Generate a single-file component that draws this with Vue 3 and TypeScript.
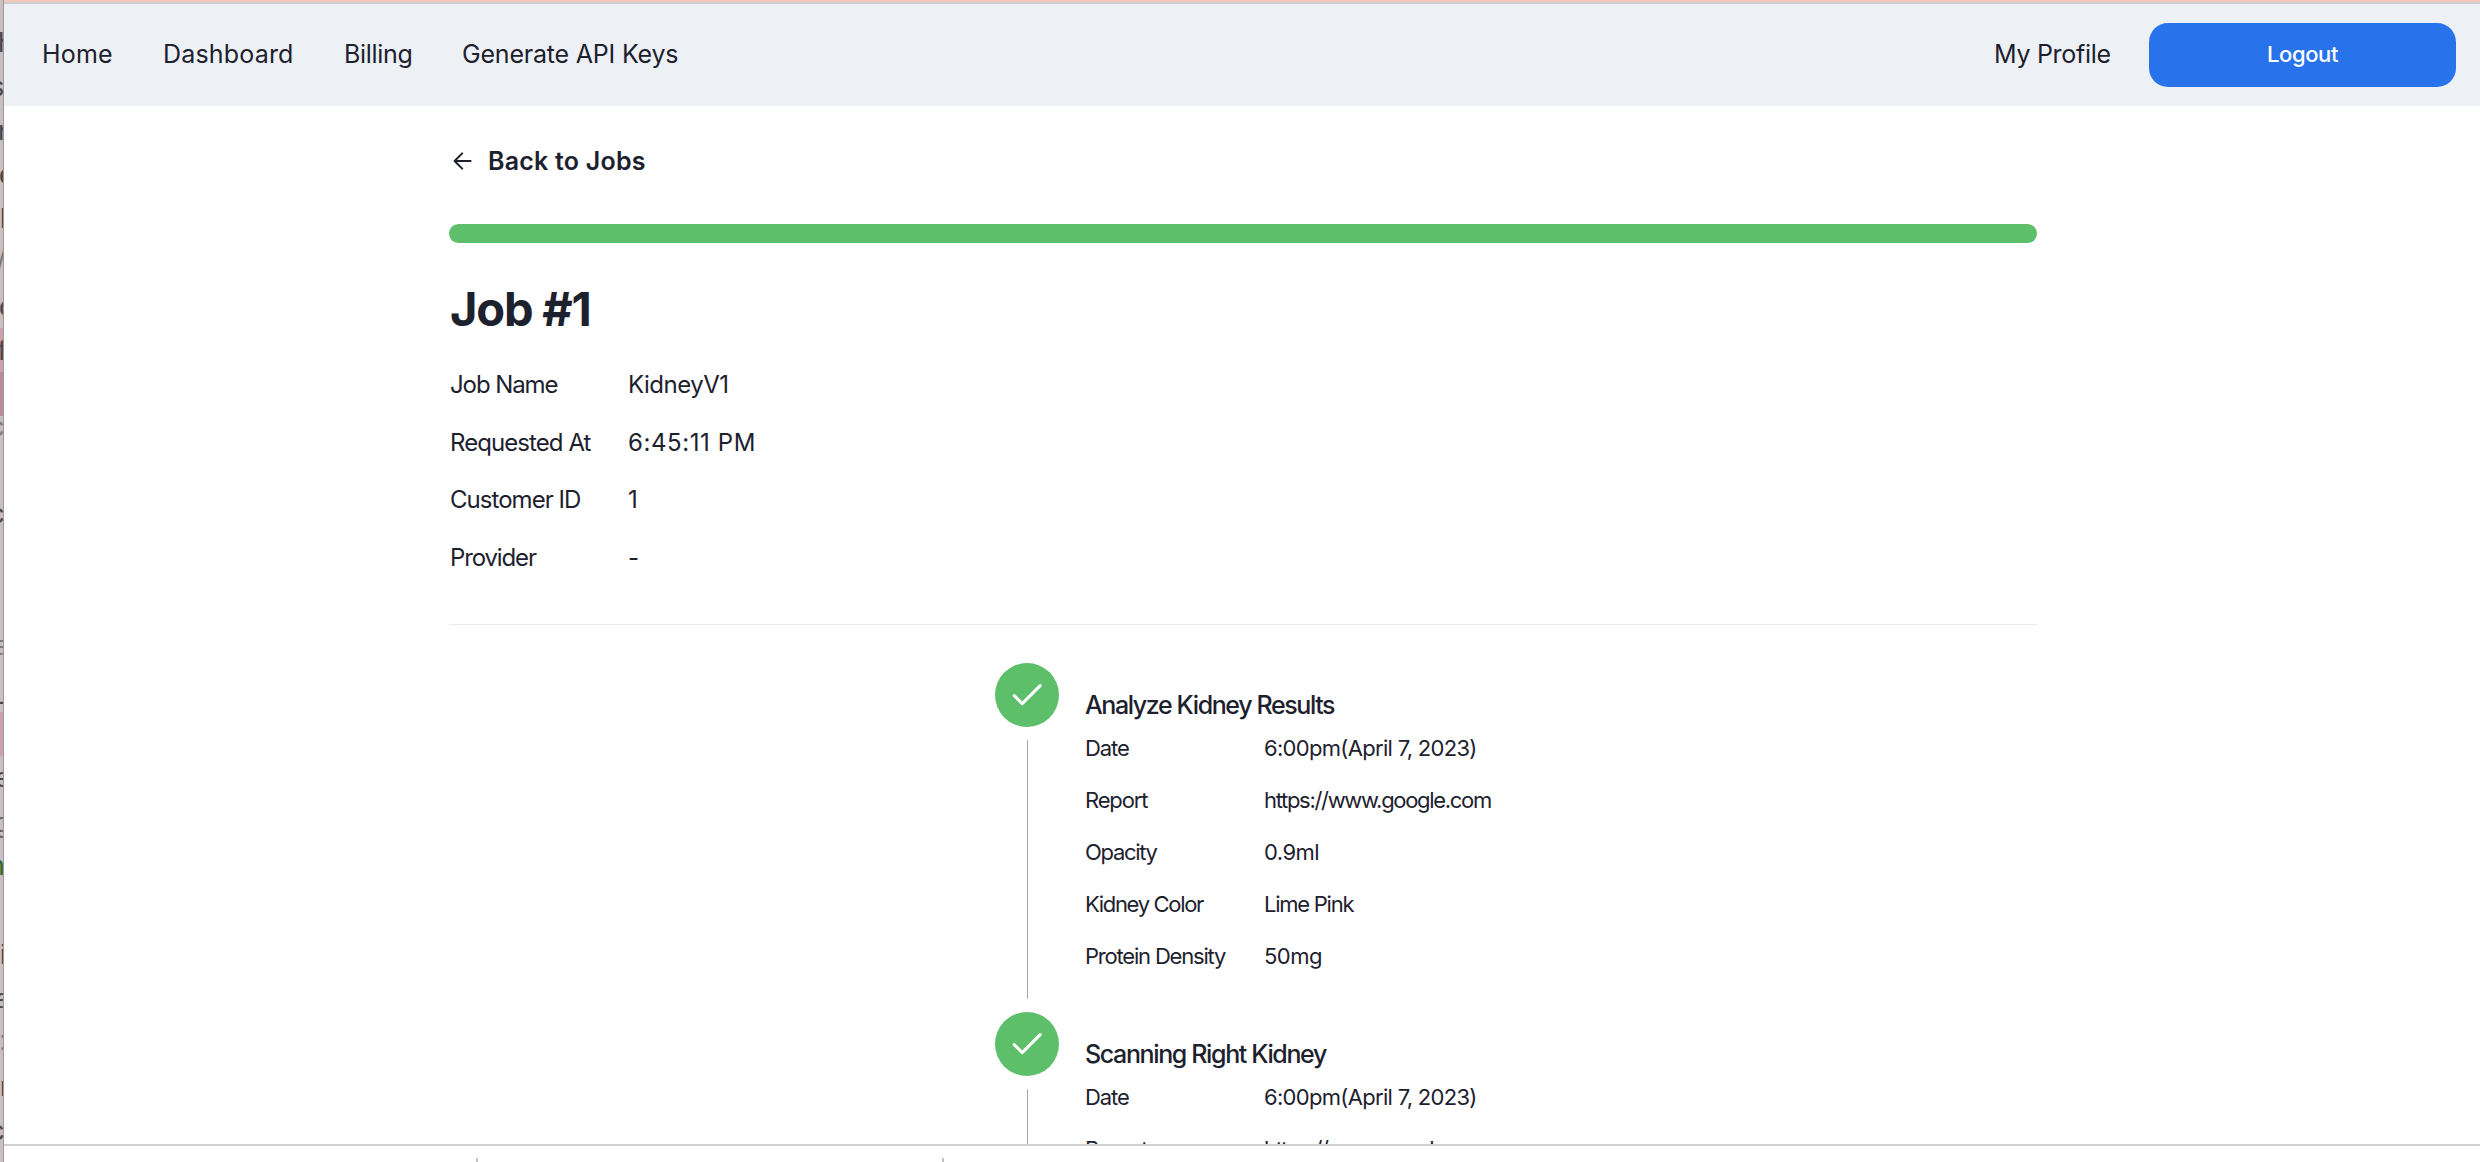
<script setup lang="ts">
interface Label {
  text: string
  spacing: number
}
interface Row {
  label: Label
  value: Label
}
interface Step {
  title: Label
  rows: Row[]
}
interface Glyph {
  text: string
  baseline: number
  left: number
  color?: string
}

const label = (text: string, spacing = 0): Label => ({ text, spacing })
const track = (l: Label) => ({ letterSpacing: `${l.spacing}px` })

const links: Label[] = [
  label('Home', 0.2),
  label('Dashboard', 0.18),
  label('Billing', -0.3),
  label('Generate API Keys', -0.2),
]
const profile = label('My Profile', -0.3)

const jobRows: Row[] = [
  { label: label('Job Name', -1.09), value: label('KidneyV1', -0.5) },
  { label: label('Requested At', -0.93), value: label('6:45:11 PM', 0.58) },
  { label: label('Customer ID', -0.96), value: label('1') },
  { label: label('Provider', -1.13), value: label('-') },
]

const resultRows: Row[] = [
  { label: label('Date', -1.07), value: label('6:00pm(April 7, 2023)', -0.69) },
  { label: label('Report', -1.15), value: label('https://www.google.com', -1.31) },
  { label: label('Opacity', -1.3), value: label('0.9ml', -0.55) },
  { label: label('Kidney Color', -1.33), value: label('Lime Pink', -1.25) },
  { label: label('Protein Density', -1.2), value: label('50mg', -0.5) },
]

const steps: Step[] = [
  { title: label('Analyze Kidney Results', -1.39), rows: resultRows },
  { title: label('Scanning Right Kidney', -1.37), rows: resultRows },
]

// Slivers of the window that sits behind this one, along the left edge.
const glyphs: Glyph[] = [
  { text: 'h', baseline: 52, left: -2 },
  { text: 's', baseline: 96, left: -10 },
  { text: 'r', baseline: 140, left: -2 },
  { text: 'e', baseline: 184, left: -1 },
  { text: 'l', baseline: 228, left: 0 },
  { text: '/', baseline: 271, left: -3, color: '#7d7878' },
  { text: 'c', baseline: 316, left: -1 },
  { text: 'f', baseline: 360, left: -2 },
  { text: 'c', baseline: 436, left: -10, color: '#807b7c' },
  { text: 'c', baseline: 523, left: -10 },
  { text: 'a', baseline: 655, left: -6, color: '#7d7878' },
  { text: '-', baseline: 710, left: -3 },
  { text: 'e', baseline: 787, left: -5 },
  { text: 'g', baseline: 832, left: -5, color: '#6b6667' },
  { text: 'n', baseline: 875, left: -11, color: '#2c6a1c' },
  { text: 'i', baseline: 964, left: 0 },
  { text: 'a', baseline: 1008, left: -5 },
  { text: ':', baseline: 1050, left: -1, color: '#7d7878' },
  { text: 'r', baseline: 1096, left: 0 },
  { text: 'c', baseline: 1140, left: -10 },
]
const place = (g: Glyph) => ({ top: `${g.baseline - 25}px`, left: `${g.left}px`, color: g.color })
</script>

<template>
  <div class="screen">
    <aside class="behind" aria-hidden="true">
      <i class="band light"></i>
      <i class="band deep"></i>
      <i class="band light low"></i>
      <span v-for="g in glyphs" :key="g.baseline" class="glyph" :style="place(g)">{{ g.text }}</span>
    </aside>

    <div class="window">
      <header class="nav">
        <nav class="links">
          <a v-for="l in links" :key="l.text" :style="track(l)">{{ l.text }}</a>
        </nav>
        <div class="account">
          <a :style="track(profile)">{{ profile.text }}</a>
          <button type="button" class="logout">Logout</button>
        </div>
      </header>

      <main class="viewport">
        <div class="content">
          <a class="back">
            <svg width="20" height="20" viewBox="0 0 20 20" fill="none" stroke="currentColor" stroke-width="2" stroke-linecap="round" stroke-linejoin="round">
              <path d="M17.6 10H1.6M9.2 2.4 1.6 10l7.6 7.6" />
            </svg>
            <span>Back to Jobs</span>
          </a>
          <div class="progress"></div>
          <h1>Job #1</h1>
          <dl class="rows job">
            <div v-for="r in jobRows" :key="r.label.text" class="row">
              <dt :style="track(r.label)">{{ r.label.text }}</dt>
              <dd :style="track(r.value)">{{ r.value.text }}</dd>
            </div>
          </dl>
          <hr />
          <section v-for="s in steps" :key="s.title.text" class="step">
            <div class="rail">
              <div class="badge">
                <svg width="32" height="32" viewBox="0 0 32 32" fill="none" stroke="#fff" stroke-width="3" stroke-linecap="round" stroke-linejoin="round">
                  <path d="M3.2 16.6 11.2 24.6 29.2 6.6" />
                </svg>
              </div>
              <div class="line"></div>
            </div>
            <div class="details">
              <h2 :style="track(s.title)">{{ s.title.text }}</h2>
              <dl class="rows">
                <div v-for="r in s.rows" :key="r.label.text" class="row">
                  <dt :style="track(r.label)">{{ r.label.text }}</dt>
                  <dd :style="track(r.value)">{{ r.value.text }}</dd>
                </div>
              </dl>
            </div>
          </section>
        </div>
      </main>

      <footer class="panel">
        <i class="tick"></i>
        <i class="tick"></i>
      </footer>
    </div>
  </div>
</template>

<style>
body {
  margin: 0;
  overflow: hidden;
}
</style>

<style scoped>
.screen {
  display: flex;
  width: 2480px;
  height: 1162px;
  overflow: hidden;
  background: #fff;
  color: #1d212e;
  font-family: Inter, "Liberation Sans", sans-serif;
  white-space: nowrap;
}

.behind {
  position: relative;
  flex: none;
  box-sizing: border-box;
  width: 4px;
  overflow: hidden;
  background: #c9bec2;
  border-right: 1px solid #a1979b;
}
.band {
  position: absolute;
  left: 0;
  top: 328px;
  width: 4px;
  height: 44px;
}
.light {
  background: #cba3af;
}
.deep {
  top: 372px;
  background: #b98c9d;
}
.low {
  top: 712px;
}
.glyph {
  position: absolute;
  color: #4b4748;
  font: 28px/32px "Liberation Sans", sans-serif;
}

.window {
  display: flex;
  flex-direction: column;
  flex: 1;
  min-width: 0;
  border-top: 2px solid #f2c8ba;
}

.nav {
  display: flex;
  flex: none;
  justify-content: space-between;
  box-sizing: border-box;
  height: 104px;
  padding: 0 24px 0 38px;
  border-top: 2px solid #cfcfd0;
  background: #edf1f6;
  font-size: 25px;
  line-height: 101px;
}
.links {
  display: grid;
  grid-template-columns: 121px 181px 118px auto;
}
.account {
  display: grid;
  grid-template-columns: 155px 307px;
}
.logout {
  height: 64px;
  margin: 19px 0 0;
  padding: 0 0 2px;
  border: 0;
  border-radius: 19px;
  background: #2873ec;
  color: #fff;
  font: 500 22px/62px Inter, sans-serif;
  letter-spacing: -0.38px;
}

.viewport {
  flex: 1;
  min-height: 0;
  overflow: hidden;
}
.content {
  box-sizing: border-box;
  width: 1588px;
  margin-left: 445px;
  padding-top: 39px;
}
.back {
  display: flex;
  align-items: center;
  gap: 15px;
  padding-left: 4px;
  font-size: 25px;
  font-weight: 600;
  line-height: 32px;
  letter-spacing: 0.22px;
}
.back svg {
  width: 20px;
}
.progress {
  height: 19px;
  margin-top: 47px;
  border-radius: 10px;
  background: #5ebf6a;
}
h1 {
  margin: 38px 0 19px 1px;
  font-size: 47px;
  font-weight: 700;
  line-height: 56px;
  letter-spacing: -1.2px;
}
.rows {
  margin: 0;
}
.row {
  display: grid;
  grid-template-columns: 179px auto;
  height: 52px;
  font-size: 22px;
  line-height: 52px;
}
dd {
  margin: 0;
}
.job .row {
  grid-template-columns: 178px auto;
  height: 57.6px;
  padding-left: 1px;
  font-size: 24px;
  line-height: 58.4px;
}
hr {
  height: 1px;
  margin: 37.6px 0 38px;
  border: 0;
  background: #e9ebef;
}

.step {
  display: flex;
  gap: 26px;
  height: 349px;
  padding-left: 546px;
}
.rail {
  display: flex;
  flex-direction: column;
  flex: none;
  gap: 13px;
  width: 64px;
  padding-bottom: 13px;
}
.badge {
  display: flex;
  flex: none;
  align-items: center;
  justify-content: center;
  width: 64px;
  height: 64px;
  border-radius: 50%;
  background: #5ebf6a;
}
.line {
  flex: 1;
  width: 1px;
  margin-left: 32px;
  background: #a3a5b0;
}
h2 {
  margin: 26px 0 1px;
  font-size: 25px;
  font-weight: 500;
  line-height: 32px;
}

.panel {
  display: flex;
  flex: none;
  align-items: flex-end;
  gap: 464px;
  box-sizing: border-box;
  height: 18px;
  padding-left: 472px;
  border-top: 2px solid #d0d0d0;
}
.tick {
  width: 2px;
  height: 4px;
  background: #c0c0c0;
}
</style>
